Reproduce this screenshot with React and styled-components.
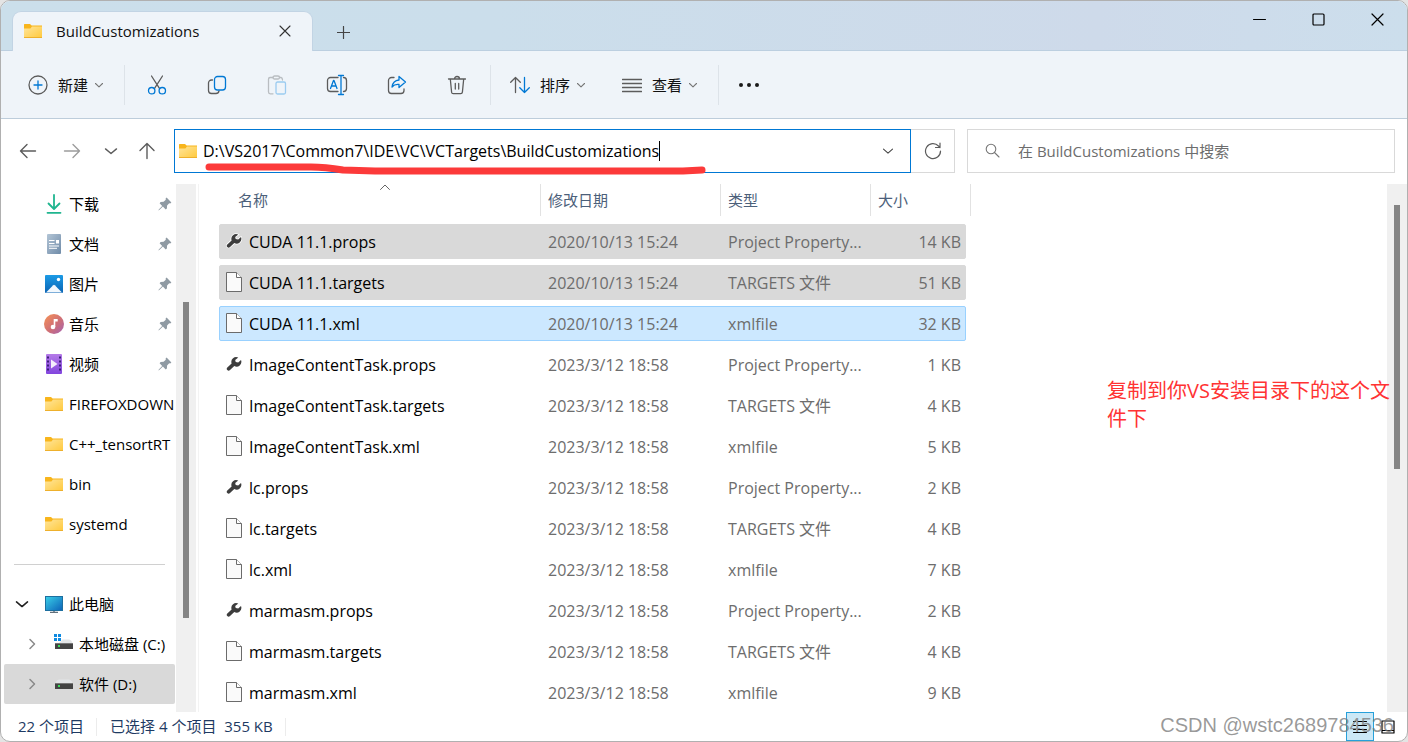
import React, { useState } from 'react';
import styled, { createGlobalStyle } from 'styled-components';

const GlobalStyle = createGlobalStyle`
  * {
    box-sizing: border-box;
  }

  body {
    margin: 0;
    background: #e4e4e4;
    color: #111;
    font-family: 'Open Sans', 'Noto Sans CJK SC', sans-serif;
    font-size: 15px;
    line-height: 20px;
  }

  button, input {
    font: inherit;
    color: inherit;
    background: none;
    border: none;
    padding: 0;
    margin: 0;
  }

  svg {
    display: block;
    flex: none;
  }
`

const Window = styled.div`
  display: flex;
  flex-direction: column;
  min-height: 100vh;
  border: 1px solid #b0b0b0;
  border-radius: 10px;
  background: #fff;
  overflow: hidden;
`

const TitleBar = styled.header`
  display: flex;
  height: 50px;
  padding-left: 11px;
  background: linear-gradient(90deg, #cbdfeb 0%, #cbdeeb 35%, #cedaea 78%, #ccdeec 100%);
  border-bottom: 1px solid #bccfe0;
`

const Tab = styled.div`
  display: flex;
  align-items: center;
  width: 301px;
  height: 40px;
  margin-top: 10px;
  padding: 0 17px 2px 11px;
  background: #eff4f9;
  border: 1px solid #c2d4e4;
  border-bottom: none;
  border-radius: 9px 9px 0 0;
`

const TabTitle = styled.span`
  flex: 1;
  margin-left: 14px;
  font-weight: 500;
`

const TabButton = styled.button`
  display: grid;
  place-items: center;
  width: ${(props) => props.$width}px;
`

const NewTab = styled(TabButton)`
  margin-top: 13px;
`

const WindowButtons = styled.div`
  display: flex;
  height: 36px;
  margin-left: auto;

  button {
    display: grid;
    place-items: center;
    width: 59px;
  }
`

const Toolbar = styled.nav`
  display: flex;
  align-items: center;
  height: 68px;
  padding-left: 19px;
  background: #eff4f9;
  border-bottom: 1px solid #bdcddb;
`

const ToolGroup = styled.div`
  display: flex;
  align-items: center;
  gap: 20px;
  height: 40px;
  padding: ${(props) => props.$padding || '0'};
  border-right: 1px solid #dde3e9;
`

const MenuButton = styled.button`
  display: flex;
  align-items: center;
  height: 40px;
  padding: 0 8px;

  span {
    margin: 0 6px 0 10px;
  }
`

const IconButton = styled.button`
  display: grid;
  place-items: center;
  width: ${(props) => props.$width || 60}px;
  height: 40px;
`

const IconRow = styled.div`
  display: flex;
`

const AddressRow = styled.div`
  display: flex;
  align-items: center;
  height: 65px;
  padding: 0 12px 2px 5px;
`

const AddressBox = styled.label`
  position: relative;
  display: flex;
  flex: 1;
  align-items: center;
  min-width: 0;
  height: 44px;
  margin-left: 8px;
  padding: 0 16px 0 4px;
  border: 1px solid #0078d4;

  input {
    field-sizing: content;
    margin-left: 6px;
    font-size: 16px;
    color: #000;
    outline: none;
  }
`

const Caret = styled.span`
  width: 1px;
  height: 20px;
  margin-right: auto;
  background: #000;
`

const Underline = styled.svg`
  position: absolute;
  left: 28px;
  top: 32px;
`

const RefreshButton = styled.button`
  display: grid;
  place-items: center;
  width: 44px;
  height: 44px;
  border: 1px solid #d9d9d9;
  border-left: none;
`

const SearchBox = styled.label`
  display: flex;
  align-items: center;
  width: 428px;
  height: 44px;
  margin-left: 12px;
  padding-left: 17px;
  border: 1px solid #d9d9d9;

  input {
    flex: 1;
    margin-left: 18px;
    outline: none;
  }

  input::placeholder {
    color: #6d6d6d;
    opacity: 1;
  }
`

const Body = styled.div`
  display: flex;
  flex: 1;
`

const Sidebar = styled.aside`
  width: 175px;
  padding: 0 1px 8px 3px;
`

const SideLink = styled.a`
  display: flex;
  align-items: center;
  height: 40px;
  padding-left: ${(props) => (props.$nested ? 10 : 0)}px;
  border-radius: 2px;
  background: ${(props) => (props.$active ? '#d9d9d9' : 'none')};
  color: #000;
  text-decoration: none;
  white-space: nowrap;
`

const Slot = styled.span`
  display: grid;
  flex: none;
  place-items: center;
  width: ${(props) => props.$width}px;
`

const SideLabel = styled.span`
  flex: 1;
  margin-left: 1px;
`

const Pin = styled.span`
  margin-right: 3px;
`

const Divider = styled.hr`
  height: 1px;
  margin: 20px 10px 19px;
  border: none;
  background: #d0d0d0;
`

const Track = styled.div`
  display: grid;
  flex: none;
  grid-template-rows: ${(props) => props.$rows};
  width: 20px;
  padding: 0 7px;
  background: #f0f0f0;

  span {
    grid-row: 2;
    background: #858585;
  }
`

const Files = styled.main`
  position: relative;
  display: flex;
  flex: 1;
  margin-left: 2px;
  border-left: 1px solid #f3f3f3;
`

const FileTable = styled.table`
  display: block;
  flex: 1;
  padding-left: 20px;

  thead, tbody {
    display: block;
  }

  th, td {
    display: block;
    padding: 0;
    text-align: left;
    font-weight: 400;
    white-space: nowrap;
  }
`

const HeadRow = styled.tr`
  display: grid;
  grid-template-columns: 311px 180px 150px 100px;
  padding-left: 11px;
  margin-bottom: 8px;
  color: #4c607a;

  th {
    position: relative;
    height: 32px;
    padding-left: 7px;
    border-right: 1px solid #e2e2e2;
    line-height: 33px;
  }

  th:first-child {
    padding-left: 8px;
  }

  svg {
    position: absolute;
    top: 0;
    left: 50%;
    margin-left: -5px;
  }
`

const rowColors = {
  picked: ['#d9d9d9', '#d9d9d9'],
  focused: ['#cce8ff', '#99d1ff'],
}

const FileRow = styled.tr`
  display: grid;
  grid-template-columns: 321px 180px 150px 94px;
  width: 747px;
  height: 35px;
  margin-bottom: 6px;
  align-items: center;
  border: 1px solid ${(props) => (rowColors[props.$state] || ['', 'transparent'])[1]};
  border-radius: 2px;
  background: ${(props) => (rowColors[props.$state] || ['none'])[0]};
  color: #6d6d6d;
  font-size: 16px;

  &:last-child {
    margin-bottom: 0;
  }

  td {
    padding-left: 7px;
  }

  td:last-child {
    padding-right: 4px;
    text-align: right;
  }
`

const FileName = styled.span`
  display: flex;
  align-items: center;
  gap: 7px;
  margin-left: -1px;
  color: #000;
`

const Note = styled.p`
  position: absolute;
  top: 193px;
  right: 8px;
  width: 292px;
  margin: 0;
  color: #ff3333;
  font-size: 20px;
  line-height: 28px;
`

const StatusBar = styled.footer`
  position: relative;
  display: flex;
  align-items: center;
  height: 29px;
  padding-left: 17px;
  color: #1e3a63;
`

const StatusItem = styled.span`
  padding: 0 12px 2px 0;
  margin-right: 13px;
  border-right: 1px solid #ececec;
  line-height: 16px;
  white-space: pre;
`

const ViewButton = styled.button`
  display: grid;
  place-items: center;
  width: 28px;
  height: 29px;
  border: 1px solid ${(props) => (props.$on ? '#26a0da' : 'transparent')};
  background: ${(props) => (props.$on ? '#cbe8f6' : 'none')};
`

const ViewButtons = styled.div`
  display: flex;
  margin-left: auto;
  margin-right: 5px;
`

const Watermark = styled.span`
  position: absolute;
  right: 13px;
  top: 3px;
  color: rgba(120, 120, 120, 0.75);
  font-family: 'Liberation Sans', sans-serif;
  font-size: 20px;
  pointer-events: none;
`

function Icon({ w = 20, h = 20, color = '#5c5c5c', width = 1.3, children }) {
  return (
    <svg
      width={w}
      height={h}
      viewBox={`0 0 ${w} ${h}`}
      fill="none"
      stroke={color}
      strokeWidth={width}
      strokeLinecap="round"
      strokeLinejoin="round"
    >
      {children}
    </svg>
  )
}

const blue = '#0078d4'

const Down = ({ w = 10, color = '#777', width = 1.1 }) => (
  <Icon w={w} h={w} color={color} width={width}>
    <path d={`M1.5 ${w * 0.35}L${w / 2} ${w * 0.68}L${w - 1.5} ${w * 0.35}`} />
  </Icon>
)

const Right = () => (
  <Icon w={10} h={12} color="#8a8a8a" width={1.5}><path d="M3 1.5l4.5 4.5L3 10.5" /></Icon>
)

const FolderIcon = () => (
  <svg width="18" height="16" viewBox="0 0 18 16">
    <defs>
      <linearGradient id="folder" x1="0" y1="0" x2="1" y2="1">
        <stop offset="0" stopColor="#ffe59b" />
        <stop offset="1" stopColor="#ffc93c" />
      </linearGradient>
    </defs>
    <path d="M0 1.5Q0 1 .6 1H6l1.6 1.6H18V6H0z" fill="#f8b51c" />
    <path d="M0 5.4h6.4L8 3.4h10V15H0z" fill="url(#folder)" />
    <path d="M0 14h18v1H0z" fill="#eeb02c" />
  </svg>
)

const DownloadIcon = () => (
  <Icon w={16} h={20} color="#1fb58f" width={1.8}>
    <path d="M8 1v13.5M2.5 9.5L8 15l5.5-5.5M1.5 18.8h13" />
  </Icon>
)

const DocIcon = () => (
  <svg width="14" height="20" viewBox="0 0 14 20">
    <defs>
      <linearGradient id="doc" x1="0" y1="0" x2="1" y2="1">
        <stop offset="0" stopColor="#b3c5d6" />
        <stop offset="1" stopColor="#6f8ba8" />
      </linearGradient>
    </defs>
    <rect width="14" height="20" rx="1" fill="url(#doc)" />
    <path d="M2 6.5h5.500M2 9.500h5.500M2 12h10M2 14.300h8" stroke="#fff" />
    <rect x="9" y="6" width="3" height="3.500" fill="#fff" />
  </svg>
)

const PictureIcon = () => (
  <svg width="18" height="18" viewBox="0 0 18 18">
    <defs>
      <linearGradient id="pic" x1="0" y1="0" x2="0" y2="1">
        <stop offset="0" stopColor="#1c9be6" />
        <stop offset="1" stopColor="#0a64b4" />
      </linearGradient>
    </defs>
    <rect width="18" height="18" rx="1" fill="url(#pic)" />
    <path d="M1 17.5l7.2-7.3q.8-.8 1.6 0L17 17.5z" fill="#f2f8fd" />
    <circle cx="13.5" cy="4.5" r="1.7" fill="#fff" />
  </svg>
)

const MusicIcon = () => (
  <svg width="20" height="20" viewBox="0 0 20 20">
    <defs>
      <linearGradient id="music" x1="0" y1="0" x2="1" y2="1">
        <stop offset="0.1" stopColor="#f08c5a" />
        <stop offset="0.55" stopColor="#cf6f76" />
        <stop offset="1" stopColor="#a463b4" />
      </linearGradient>
    </defs>
    <circle cx="10" cy="10" r="10" fill="url(#music)" />
    <circle cx="9" cy="13" r="2.3" fill="#fff" />
    <path d="M9.7 5h4v2.5h-2.4V13H9.7z" fill="#fff" />
  </svg>
)

const VideoIcon = () => (
  <svg width="16" height="20" viewBox="0 0 16 20">
    <defs>
      <linearGradient id="video" x1="0" y1="0" x2="0" y2="1">
        <stop offset="0" stopColor="#b57be8" />
        <stop offset="1" stopColor="#8245de" />
      </linearGradient>
    </defs>
    <rect width="16" height="20" rx="1" fill="url(#video)" />
    <path d="M2 2.5v16M14 2.5v16" stroke="#3d1f7a" strokeWidth="2" strokeDasharray="2 2" />
    <path d="M5 5.5v9l6.5-4.5z" fill="#f4eefc" />
  </svg>
)

const PcIcon = () => (
  <svg width="18" height="17" viewBox="0 0 18 17">
    <defs>
      <linearGradient id="pc" x1="0" y1="0" x2="1" y2="1">
        <stop offset="0" stopColor="#3ad0e8" />
        <stop offset="1" stopColor="#0c62b8" />
      </linearGradient>
    </defs>
    <rect x="0.5" y="0.5" width="17" height="14" fill="url(#pc)" stroke="#1d6f9f" />
    <path d="M8 15h2v1H8z" fill="#8a99a5" />
    <path d="M5 16.4h8" stroke="#62717c" strokeWidth="1.2" />
  </svg>
)

const DriveIcon = ({ system }) => (
  <svg width="20" height="20" viewBox="0 0 20 20">
    {system && <path d="M0 0h3v3H0zM4 0h3v3H4zM0 4h3v3H0zM4 4h3v3H4z" fill="#0f8ae0" />}
    <path
      d={system ? 'M8.5 5.5H15q1.500 0 2.500 1.500l1.500 3H4z' : 'M5 5.5h10q1.500 0 2.500 1.500l1.500 3H1l1.500-3q1-1.500 2.500-1.500z'}
      fill="#e3e5e7"
    />
    <rect x="1" y="9" width="18" height="6" rx="0.5" fill="#444" />
    <path d="M1 9.5h18" stroke="#777" />
    <rect x="4" y="11" width="2" height="2" fill="#3be05a" />
  </svg>
)

const PinIcon = () => (
  <svg width="14" height="14" viewBox="0 0 14 14">
    <path d="M8.6.6l4.800 4.800-1.200 1-1-.2-2.100 2.200-.2 3-1.200 1L4.900 9.600 1.300 13l-1 .5.500-1.100L4.200 8.900 1.600 6.200l1-1.200 3-.2 2.200-2.100-.2-1.100z" fill="#8f9aa3" />
  </svg>
)

const PageIcon = () => (
  <svg width="16" height="22" viewBox="0 0 16 22">
    <path d="M.5.5h10l5 5v14H.5z" fill="#fafafa" stroke="#6b6b6b" />
    <path d="M10.5.5v5h5" fill="#fff" stroke="#6b6b6b" />
  </svg>
)

const WrenchIcon = () => (
  <svg width="16" height="22" viewBox="0 0 16 22">
    <path
      d="M12.3 3.600a4.800 4.800 0 0 0-6.700 5.800L1.300 13.400a1.900 1.900 0 0 0 0 2.600 1.900 1.900 0 0 0 2.700 0l4.300-3.900a4.800 4.800 0 0 0 6.700-6L12.200 8.600 9.700 8 9.200 5.900z"
      fill="#3d3d3d"
      stroke="#fff"
      strokeWidth="1.5"
      paintOrder="stroke"
    />
  </svg>
)

const tools = [
  ['剪切', (
    <Icon>
      <path d="M4.5 1l7.800 12.200M15.500 1L7.700 13.200" />
      <g stroke={blue}>
        <circle cx="4.7" cy="15.7" r="3.2" />
        <circle cx="15.3" cy="15.7" r="3.2" />
      </g>
    </Icon>
  )],
  ['复制', (
    <Icon>
      <path d="M5.5 5H4.5A3 3 0 0 0 1.5 8v7.5a3 3 0 0 0 3 3H9q2.5 0 3-2.500" />
      <rect x="7.5" y="1.5" width="11" height="13.5" rx="3" stroke={blue} />
    </Icon>
  )],
  ['粘贴', (
    <Icon color="#b9bdc1">
      <path d="M6 2.5H3a1.800 1.800 0 0 0-1.500 2V17a1.800 1.800 0 0 0 1.800 1.800H6M12.500 2.500H14q1.500.3 1.500 2.500" />
      <rect x="6" y="1" width="6.5" height="3" rx="1.5" />
      <rect x="9" y="7" width="9.5" height="12" rx="1.5" stroke="#9bcbf0" />
    </Icon>
  )],
  ['重命名', (
    <Icon w={22} h={22}>
      <path d="M12 3.5H4.500a3 3 0 0 0-3 3v8a3 3 0 0 0 3 3H12M17.500 3.500a3 3 0 0 1 3 3v8a3 3 0 0 1-3 3" />
      <path d="M4.5 14.500l3-8h.5l3 8M5.600 12h4.400M12.500 1.500h5M12.500 20.500h5M15 1.500v19" stroke={blue} />
    </Icon>
  )],
  ['共享', (
    <Icon>
      <path d="M7 2.5H4.500a3 3 0 0 0-3 3v10a3 3 0 0 0 3 3h9.500a3 3 0 0 0 3-3V14" />
      <path d="M12 1.5l6.500 5.500-6.500 5.500V9.500q-4.500-.5-7 2.500 1-6.500 7-7z" stroke={blue} />
    </Icon>
  )],
  ['删除', (
    <Icon>
      <path d="M1.5 4h17M3.300 4l1.300 13.200a1.700 1.700 0 0 0 1.700 1.500h7.400a1.700 1.700 0 0 0 1.700-1.500L16.700 4M7.500 4a2.500 2.500 0 0 1 5 0M8.300 8.500v5.500M11.700 8.500v5.500" />
    </Icon>
  )],
]

const quickAccess = [
  { label: '下载', icon: <DownloadIcon />, pinned: true },
  { label: '文档', icon: <DocIcon />, pinned: true },
  { label: '图片', icon: <PictureIcon />, pinned: true },
  { label: '音乐', icon: <MusicIcon />, pinned: true },
  { label: '视频', icon: <VideoIcon />, pinned: true },
  { label: 'FIREFOXDOWN', icon: <FolderIcon /> },
  { label: 'C++_tensortRT', icon: <FolderIcon /> },
  { label: 'bin', icon: <FolderIcon /> },
  { label: 'systemd', icon: <FolderIcon /> },
]

const computer = [
  { label: '此电脑', icon: <PcIcon />, arrow: <Down w={14} color="#222" width={1.6} /> },
  { label: '本地磁盘 (C:)', icon: <DriveIcon system />, arrow: <Right />, nested: true },
  { label: '软件 (D:)', icon: <DriveIcon />, arrow: <Right />, nested: true, active: true },
]

const types = {
  props: 'Project Property...',
  targets: 'TARGETS 文件',
  xml: 'xmlfile',
}

const files = [
  ['CUDA 11.1.props', '2020/10/13 15:24', 14, 'picked'],
  ['CUDA 11.1.targets', '2020/10/13 15:24', 51, 'picked'],
  ['CUDA 11.1.xml', '2020/10/13 15:24', 32, 'focused'],
  ['ImageContentTask.props', '2023/3/12 18:58', 1],
  ['ImageContentTask.targets', '2023/3/12 18:58', 4],
  ['ImageContentTask.xml', '2023/3/12 18:58', 5],
  ['lc.props', '2023/3/12 18:58', 2],
  ['lc.targets', '2023/3/12 18:58', 4],
  ['lc.xml', '2023/3/12 18:58', 7],
  ['marmasm.props', '2023/3/12 18:58', 2],
  ['marmasm.targets', '2023/3/12 18:58', 4],
  ['marmasm.xml', '2023/3/12 18:58', 9],
]

function SideItem({ item }) {
  return (
    <SideLink href="#" $nested={item.nested} $active={item.active}>
      <Slot $width={36}>{item.arrow}</Slot>
      <Slot $width={28}>{item.icon}</Slot>
      <SideLabel>{item.label}</SideLabel>
      {item.pinned && <Pin><PinIcon /></Pin>}
    </SideLink>
  )
}

function App() {
  const [path, setPath] = useState('D:\\VS2017\\Common7\\IDE\\VC\\VCTargets\\BuildCustomizations')

  return (
    <>
      <GlobalStyle />
      <Window>
        <TitleBar>
          <Tab>
            <FolderIcon />
            <TabTitle>BuildCustomizations</TabTitle>
            <TabButton $width={20} aria-label="关闭标签页">
              <Icon w={12} h={12} color="#333" width={1.1}><path d="M1 1l10 10M11 1L1 11" /></Icon>
            </TabButton>
          </Tab>
          <NewTab $width={60} aria-label="新标签页">
            <Icon w={13} h={13} color="#444" width={1.2}><path d="M6.5.5v12M.5 6.5h12" /></Icon>
          </NewTab>
          <WindowButtons>
            <button aria-label="最小化">
              <Icon w={13} h={13} color="#000" width={1}><path d="M.5 6.5h12" /></Icon>
            </button>
            <button aria-label="最大化">
              <Icon w={13} h={13} color="#000" width={1.2}><rect x="1" y="1" width="11" height="11" rx="1" /></Icon>
            </button>
            <button aria-label="关闭">
              <Icon w={13} h={13} color="#000" width={1.2}><path d="M1 1l11 11M12 1L1 12" /></Icon>
            </button>
          </WindowButtons>
        </TitleBar>

        <Toolbar>
          <ToolGroup $padding="0 12px 0 0">
            <MenuButton>
              <Icon>
                <circle cx="10" cy="10" r="9" />
                <path d="M10 6v8M6 10h8" stroke={blue} />
              </Icon>
              <span>新建</span>
              <Down />
            </MenuButton>
          </ToolGroup>
          <ToolGroup $padding="0 3px 0 2px">
            <IconRow>
              {tools.map(([label, icon]) => (
                <IconButton key={label} aria-label={label}>{icon}</IconButton>
              ))}
            </IconRow>
          </ToolGroup>
          <ToolGroup $padding="0 12px 0 11px">
            <MenuButton>
              <Icon>
                <path d="M5.5 17.5V2.5M.7 7.3l4.8-4.8 4.8 4.8" />
                <path d="M14.5 2.5v15M9.8 12.7l4.7 4.8 4.8-4.8" stroke={blue} />
              </Icon>
              <span>排序</span>
              <Down />
            </MenuButton>
            <MenuButton>
              <Icon><path d="M.5 4.5h19M.5 8.5h19M.5 12.5h19M.5 16.5h19" /></Icon>
              <span>查看</span>
              <Down />
            </MenuButton>
          </ToolGroup>
          <IconButton aria-label="更多">
            <svg width="20" height="6" viewBox="0 0 20 6" fill="#1a1a1a">
              <circle cx="2" cy="3" r="2" />
              <circle cx="10" cy="3" r="2" />
              <circle cx="18" cy="3" r="2" />
            </svg>
          </IconButton>
        </Toolbar>

        <AddressRow>
          <IconButton $width={44} aria-label="后退">
            <Icon width={1.4}><path d="M17.5 10h-15M9 3.5L2.5 10 9 16.5" /></Icon>
          </IconButton>
          <IconButton $width={44} aria-label="前进">
            <Icon color="#9c9c9c" width={1.4}><path d="M2.5 10h15M11 3.5l6.5 6.5-6.5 6.5" /></Icon>
          </IconButton>
          <IconButton $width={34} aria-label="最近位置">
            <Down w={14} color="#5c5c5c" width={1.4} />
          </IconButton>
          <IconButton $width={38} aria-label="向上">
            <Icon width={1.4}><path d="M10 17.5v-15M3 9.5l7-7 7 7" /></Icon>
          </IconButton>
          <AddressBox>
            <FolderIcon />
            <input aria-label="地址" value={path} onChange={(e) => setPath(e.target.value)} />
            <Caret />
            <Down w={12} color="#444" />
            <Underline width="506" height="14" viewBox="0 0 506 14" fill="none">
              <path
                d="M6 5H108Q122 5 140 8L172 9H480L499 8"
                stroke="#fc3a3a"
                strokeWidth="7"
                strokeLinecap="round"
                strokeLinejoin="round"
              />
            </Underline>
          </AddressBox>
          <RefreshButton aria-label="刷新">
            <Icon w={18} h={18} width={1.2}>
              <path d="M16.5 9A7.5 7.5 0 1 1 14.5 4L16 5.5M16 1v4.5h-4.5" />
            </Icon>
          </RefreshButton>
          <SearchBox>
            <Icon w={15} h={15} color="#777" width={1.1}>
              <circle cx="6" cy="6" r="4.8" />
              <path d="M9.5 9.5l4.5 4.5" />
            </Icon>
            <input type="search" aria-label="搜索" placeholder="在 BuildCustomizations 中搜索" />
          </SearchBox>
        </AddressRow>

        <Body>
          <Sidebar>
            {quickAccess.map((item) => <SideItem key={item.label} item={item} />)}
            <Divider />
            {computer.map((item) => <SideItem key={item.label} item={item} />)}
          </Sidebar>
          <Track $rows="118fr 316fr 94fr"><span /></Track>

          <Files>
            <FileTable>
              <thead>
                <HeadRow>
                  <th>
                    名称
                    <Icon w={10} h={6} color="#666" width={1}><path d="M.5 5.5L5 1l4.5 4.5" /></Icon>
                  </th>
                  <th>修改日期</th>
                  <th>类型</th>
                  <th>大小</th>
                </HeadRow>
              </thead>
              <tbody>
                {files.map(([name, date, size, state]) => {
                  const ext = name.split('.').pop()
                  return (
                    <FileRow key={name} $state={state}>
                      <td>
                        <FileName>
                          {ext === 'props' ? <WrenchIcon /> : <PageIcon />}
                          {name}
                        </FileName>
                      </td>
                      <td>{date}</td>
                      <td>{types[ext]}</td>
                      <td>{size} KB</td>
                    </FileRow>
                  )
                })}
              </tbody>
            </FileTable>
            <Track $rows="21fr 264fr 243fr"><span /></Track>
            <Note>复制到你VS安装目录下的这个文件下</Note>
          </Files>
        </Body>

        <StatusBar>
          <StatusItem>22 个项目</StatusItem>
          <StatusItem>{'已选择 4 个项目  355 KB'}</StatusItem>
          <ViewButtons>
            <ViewButton $on aria-label="详细信息">
              <Icon w={14} h={14} color="#000" width={1}>
                <path d="M.5 1.5h2M5 1.5h8.5M.5 5.5h2M5 5.5h8.5M.5 9.5h2M5 9.5h8.5M.5 12.5h13" />
              </Icon>
            </ViewButton>
            <ViewButton aria-label="大图标">
              <Icon w={14} h={14} color="#000" width={1.2}><path d="M1 1h12v12H1zM1 10.5h12" /></Icon>
            </ViewButton>
          </ViewButtons>
          <Watermark>CSDN @wstc2689784536</Watermark>
        </StatusBar>
      </Window>
    </>
  )
}

export default App;
